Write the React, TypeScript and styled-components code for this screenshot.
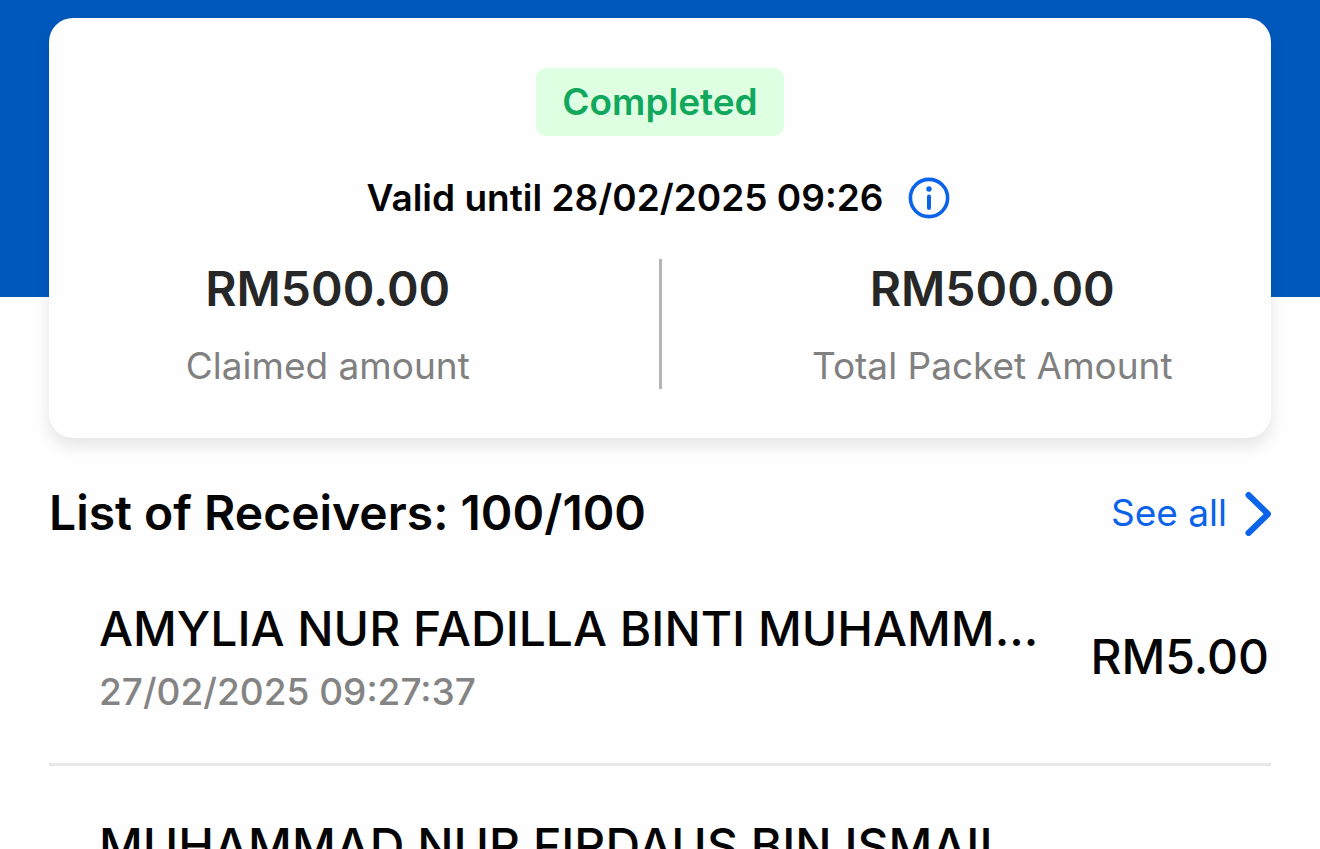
import React from "react";
import styled, { createGlobalStyle } from "styled-components";

const GlobalStyle = createGlobalStyle`
  * { box-sizing: border-box; }
  body {
    margin: 0;
    background: #fefefe;
    color: #050505;
    font-family: Inter, "Liberation Sans", sans-serif;
  }
  h2, p, ul, dl, dd { margin: 0; padding: 0; }
`;

const Page = styled.main`
  height: 100vh;
  overflow: hidden;
`;

const Hero = styled.section`
  padding: 18px 49px 0;
  background: linear-gradient(#0058bc 297px, transparent 297px);
`;

const Card = styled.div`
  display: flex;
  flex-direction: column;
  align-items: center;
  padding: 50px 0 49px;
  border-radius: 24px;
  background: #fefefe;
  box-shadow: 0 8px 16px rgba(0, 0, 0, 0.1);
`;

const Badge = styled.span`
  padding: 11px 26px;
  border-radius: 10px;
  background: #deffe2;
  color: #11a75c;
  font-size: 37px;
  font-weight: 600;
  line-height: 46px;
`;

const Validity = styled.div`
  display: flex;
  align-items: center;
  gap: 22px;
  margin: 38px 0 37px;
  font-size: 37px;
  font-weight: 600;
  line-height: 46px;
`;

const InfoButton = styled.button`
  display: flex;
  padding: 0;
  border: 0;
  background: none;
  color: #0b63ea;
  cursor: pointer;
`;

const Totals = styled.dl`
  display: grid;
  grid-template-columns: 1fr 3px 1fr;
  column-gap: 52px;
  width: 100%;
`;

const Rule = styled.div`
  background: #b5b5b5;
`;

const Total = styled.div`
  display: flex;
  flex-direction: column-reverse;
  align-items: center;
  gap: 24px;
`;

const TotalLabel = styled.dt`
  color: #808080;
  font-size: 37px;
  line-height: 46px;
`;

const TotalValue = styled.dd`
  color: #272727;
  font-size: 48px;
  font-weight: 600;
  line-height: 60px;
`;

const Receivers = styled.section`
  padding: 45px 49px 0;
`;

const ListHeader = styled.header`
  display: flex;
  align-items: center;
  justify-content: space-between;
  margin-bottom: 6px;
`;

const ListTitle = styled.h2`
  font-size: 48px;
  font-weight: 600;
  line-height: 60px;
`;

const SeeAll = styled.a`
  display: flex;
  align-items: center;
  gap: 16px;
  color: #0b63ea;
  font-size: 37px;
  line-height: 46px;
  text-decoration: none;
`;

const List = styled.ul`
  list-style: none;
`;

const Row = styled.li`
  display: flex;
  align-items: center;
  justify-content: space-between;
  gap: 24px;
  padding: 50px 2px 48px 50px;
  border-bottom: 3px solid #e8e8e8;
`;

const Name = styled.p`
  font-size: 48px;
  font-weight: 500;
  line-height: 60px;
  white-space: nowrap;
`;

const ClaimedAt = styled.p`
  margin-top: 10px;
  color: #848484;
  font-size: 37px;
  font-weight: 450;
  line-height: 46px;
`;

const Amount = styled.p`
  font-size: 48px;
  font-weight: 500;
  line-height: 60px;
`;

type Receiver = { name: string; claimedAt?: string; amount?: string };

const receivers: Receiver[] = [
  {
    name: "AMYLIA NUR FADILLA BINTI MUHAMM...",
    claimedAt: "27/02/2025 09:27:37",
    amount: "RM5.00",
  },
  { name: "MUHAMMAD NUR FIRDAUS BIN ISMAIL" },
];

const InfoIcon = () => (
  <svg width="48" height="48" viewBox="0 0 48 48" fill="none" aria-hidden="true">
    <circle cx="24" cy="24" r="18.6" stroke="currentColor" strokeWidth="3.6" />
    <circle cx="24" cy="15" r="2.7" fill="currentColor" />
    <path d="M24 22.5V34" stroke="currentColor" strokeWidth="4" strokeLinecap="round" />
  </svg>
);

const ChevronIcon = () => (
  <svg width="28" height="46" viewBox="0 0 28 46" fill="none" aria-hidden="true">
    <path
      d="M5.5 5L25 24L5.5 43"
      stroke="currentColor"
      strokeWidth="6"
      strokeLinecap="round"
      strokeLinejoin="round"
    />
  </svg>
);

export default function App() {
  return (
    <Page>
      <GlobalStyle />
      <Hero>
        <Card>
          <Badge>Completed</Badge>
          <Validity>
            <p>Valid until 28/02/2025 09:26</p>
            <InfoButton type="button" aria-label="Validity information">
              <InfoIcon />
            </InfoButton>
          </Validity>
          <Totals>
            <Total>
              <TotalLabel>Claimed amount</TotalLabel>
              <TotalValue>RM500.00</TotalValue>
            </Total>
            <Rule />
            <Total>
              <TotalLabel>Total Packet Amount</TotalLabel>
              <TotalValue>RM500.00</TotalValue>
            </Total>
          </Totals>
        </Card>
      </Hero>
      <Receivers>
        <ListHeader>
          <ListTitle>List of Receivers: 100/100</ListTitle>
          <SeeAll href="#receivers">
            See all
            <ChevronIcon />
          </SeeAll>
        </ListHeader>
        <List id="receivers">
          {receivers.map((receiver) => (
            <Row key={receiver.name}>
              <div>
                <Name>{receiver.name}</Name>
                {receiver.claimedAt && <ClaimedAt>{receiver.claimedAt}</ClaimedAt>}
              </div>
              {receiver.amount && <Amount>{receiver.amount}</Amount>}
            </Row>
          ))}
        </List>
      </Receivers>
    </Page>
  );
}
